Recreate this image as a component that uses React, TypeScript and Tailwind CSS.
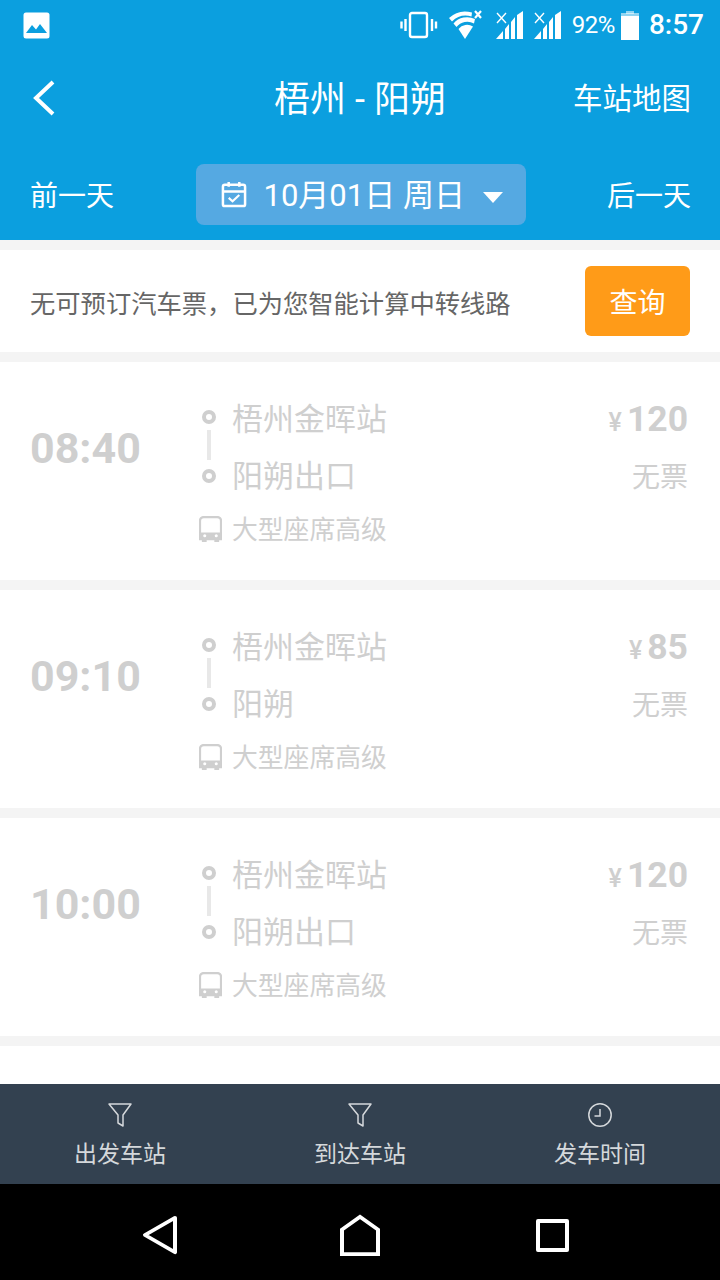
const cjk = "font-['Roboto','Noto_Sans_CJK_SC',sans-serif]";

function Wifi() {
  return (
    <svg width="34" height="30" viewBox="0 0 34 30" className="text-white">
      <path d="M0 8 A24 24 0 0 1 23 2.5 L22.5 6.5 A20 20 0 0 0 3 11.5 Z" fill="currentColor" />
      <path d="M4.5 13.5 A18 18 0 0 1 26 9 L25 13.5 A14 14 0 0 0 7.5 17 Z" fill="currentColor" />
      <path d="M9.5 19 A11 11 0 0 1 24 16.5 L16 29 Z" fill="currentColor" />
      <path d="M26 1 L32 8 M32 1 L26 8" stroke="currentColor" strokeWidth="2.2" />
    </svg>
  );
}

function Signal() {
  return (
    <svg width="28" height="30" viewBox="0 0 28 30" className="text-white">
      <path d="M0 29 L7 21 V29 Z M9 19 L13 14 V29 H9 Z M15 12 L19 7 V29 H15 Z M21 5 L27 1 V29 H21 Z" fill="currentColor" />
      <path d="M1 3 L10 13 M10 3 L1 13" stroke="currentColor" strokeWidth="1.4" />
    </svg>
  );
}

function StatusBar() {
  return (
    <div className="h-[50px] flex items-center justify-between pl-[23px] pr-[16px] text-white">
      <svg width="27" height="27" viewBox="0 0 27 27">
        <rect x="0.5" y="0.5" width="26" height="26" rx="2.5" fill="white" />
        <path d="M3 21 L9 13 L13 17.5 L17 12 L24 21 Z" fill="#0b9fdf" />
      </svg>
      <div className="flex items-center">
        <svg width="38" height="30" viewBox="0 0 38 30" className="mr-[11px]">
          <rect x="10" y="3" width="17" height="24" rx="2" fill="none" stroke="white" strokeWidth="2.4" />
          <path d="M5.5 9 V21 M1.5 11.5 V18.5 M32 9 V21 M36 11.5 V18.5" stroke="white" strokeWidth="2.4" />
        </svg>
        <Wifi />
        <div className="w-[13px]" />
        <Signal />
        <div className="w-[10px]" />
        <Signal />
        <span className={`${cjk} ml-[10px] text-[24px] leading-none tracking-[-0.5px]`}>92%</span>
        <svg width="20" height="30" viewBox="0 0 20 30" className="ml-[5px]">
          <rect x="6" y="1" width="8" height="3" fill="white" fillOpacity="0.55" />
          <rect x="1" y="3" width="18" height="6" fill="white" fillOpacity="0.55" />
          <rect x="1" y="6" width="18" height="24" fill="white" />
        </svg>
        <span className={`${cjk} ml-[9px] text-[28px] font-medium leading-none`}>8:57</span>
      </div>
    </div>
  );
}

function Header() {
  return (
    <div className="bg-[#0b9fdf] text-white">
      <StatusBar />
      <div className="relative h-[96px] flex items-center justify-between pl-[30px] pr-[29px]">
        <svg width="30" height="40" viewBox="0 0 30 40">
          <path d="M23 4 L6 20 L23 36" fill="none" stroke="white" strokeWidth="4" />
        </svg>
        <span className={`${cjk} absolute left-0 right-0 pt-[4px] text-center text-[36px] leading-none`}>梧州 - 阳朔</span>
        <span className={`${cjk} pt-[4px] text-[29.5px] leading-none`}>车站地图</span>
      </div>
      <div className="h-[94px] pt-[2px] flex items-center justify-between pl-[30px] pr-[29px]">
        <span className={`${cjk} pt-[5px] text-[28px] leading-none`}>前一天</span>
        <div className="w-[330px] h-[61px] bg-[#55a9e2] rounded-[8px] flex items-center pl-[25px]">
          <svg width="26" height="29" viewBox="0 0 27 30">
            <path d="M2 7 a2 2 0 0 1 2 -2 H23 a2 2 0 0 1 2 2 V25 a2 2 0 0 1 -2 2 H4 a2 2 0 0 1 -2 -2 Z M2 12 H25 M8 2 V7 M19 2 V7" fill="none" stroke="white" strokeWidth="2.6" />
            <path d="M8 18.5 L12 22 L19 15.5" fill="none" stroke="white" strokeWidth="2.2" />
          </svg>
          <span className={`${cjk} ml-[17px] pt-[3px] text-[31px] leading-none whitespace-pre`}>10月01日 周日</span>
          <div className="ml-[18px] mt-[7px] w-0 h-0 border-l-[10px] border-r-[10px] border-t-[11px] border-l-transparent border-r-transparent border-t-white" />
        </div>
        <span className={`${cjk} pt-[5px] text-[28px] leading-none`}>后一天</span>
      </div>
    </div>
  );
}

function Bus() {
  return (
    <svg width="23" height="27" viewBox="0 0 24 28" className="ml-[-1px]">
      <path d="M5 1 H19 A4 4 0 0 1 23 5 V24 H1 V5 A4 4 0 0 1 5 1 Z" fill="none" stroke="#cfcfcf" strokeWidth="2.4" />
      <path d="M1 17 H23 V24 H1 Z M3 24 H8 V27 H3 Z M16 24 H21 V27 H16 Z" fill="#cfcfcf" />
      <circle cx="6" cy="20.5" r="1.6" fill="white" />
      <circle cx="18" cy="20.5" r="1.6" fill="white" />
    </svg>
  );
}

function Ticket({ time, to, price }: { time: string; to: string; price: string }) {
  return (
    <div className="h-[218px] bg-white flex pl-[30px] pr-[32px] mb-[10px] text-[#cfcfcf]">
      <div className={`${cjk} w-[170px] pt-[65px] text-[43px] font-bold leading-none`}>{time}</div>
      <div className="flex-1 pt-[38px]">
        <div className="flex items-center h-[36px]">
          <div className="w-[14px] h-[14px] ml-[2px] mb-[2px] rounded-full border-[4px] border-[#cfcfcf]" />
          <span className={`${cjk} ml-[16px] pt-[2px] text-[31px] leading-none`}>梧州金晖站</span>
        </div>
        <div className="ml-[7px] mt-[-6px] w-[4px] h-[30px] bg-[#e8e8e8]" />
        <div className="flex items-center h-[36px] mt-[-2px]">
          <div className="w-[14px] h-[14px] ml-[2px] mb-[1px] rounded-full border-[4px] border-[#cfcfcf]" />
          <span className={`${cjk} ml-[16px] pt-[1px] text-[31px] leading-none`}>{to}</span>
        </div>
        <div className="flex items-center mt-[22px]">
          <Bus />
          <span className={`${cjk} ml-[10px] pt-[2px] text-[25.8px] leading-none`}>大型座席高级</span>
        </div>
      </div>
      <div className="pt-[40px] flex flex-col items-end">
        <div className="flex items-baseline h-[38px]">
          <span className={`${cjk} text-[25px] font-medium mr-[5px] leading-none`}>¥</span>
          <span className={`${cjk} text-[35.5px] font-bold leading-none`}>{price}</span>
        </div>
        <span className={`${cjk} mt-[24px] text-[28px] leading-none`}>无票</span>
      </div>
    </div>
  );
}

function Notice() {
  return (
    <div className="mt-[10px] mb-[10px] h-[102px] bg-white flex items-center justify-between pl-[30px] pr-[30px]">
      <span className={`${cjk} pt-[7px] text-[25.3px] leading-none text-[#666666]`}>无可预订汽车票，已为您智能计算中转线路</span>
      <button className={`${cjk} w-[105px] h-[70px] mb-[1px] pt-[6px] rounded-[6px] bg-[#ff9b18] text-white text-[28px] leading-none`}>查询</button>
    </div>
  );
}

function Funnel() {
  return (
    <svg width="26" height="26" viewBox="0 0 26 26">
      <path d="M2 2 H24 L16 13 V24 L11 21 V13 Z" fill="none" stroke="#d5d8db" strokeWidth="1.5" strokeLinejoin="round" />
    </svg>
  );
}

function Clock() {
  return (
    <svg width="26" height="26" viewBox="0 0 26 26">
      <circle cx="13" cy="13" r="11.2" fill="none" stroke="#d5d8db" strokeWidth="1.5" />
      <path d="M13 7 V14 H7.5" fill="none" stroke="#d5d8db" strokeWidth="1.5" />
    </svg>
  );
}

function Tab({ icon, label }: { icon: React.ReactNode; label: string }) {
  return (
    <div className="flex-1 flex flex-col items-center pt-[18px]">
      {icon}
      <span className={`${cjk} mt-[15px] text-[23px] leading-none text-[#d5d8db]`}>{label}</span>
    </div>
  );
}

export default function App() {
  return (
    <div className="w-[720px] h-[1280px] overflow-hidden flex flex-col bg-[#f4f4f4]">
      <Header />
      <div className="flex-1 overflow-hidden">
        <Notice />
        <Ticket time="08:40" to="阳朔出口" price="120" />
        <Ticket time="09:10" to="阳朔" price="85" />
        <Ticket time="10:00" to="阳朔出口" price="120" />
        <div className="h-[60px] bg-white" />
      </div>
      <div className="h-[100px] shrink-0 bg-[#334150] flex">
        <Tab icon={<Funnel />} label="出发车站" />
        <Tab icon={<Funnel />} label="到达车站" />
        <Tab icon={<Clock />} label="发车时间" />
      </div>
      <div className="h-[96px] shrink-0 bg-black flex items-center pt-[6px] pl-[140px]">
        <svg width="40" height="40" viewBox="0 0 40 44" preserveAspectRatio="none">
          <path d="M35 3 L5 22 L35 41 Z" fill="none" stroke="white" strokeWidth="4" strokeLinejoin="round" />
        </svg>
        <svg width="42" height="42" viewBox="0 0 42 46" className="ml-[159px]" preserveAspectRatio="none">
          <path d="M3 44 V17 L21 3 L39 17 V44 Z" fill="none" stroke="white" strokeWidth="4" />
        </svg>
        <div className="ml-[155px] w-[33px] h-[33px] border-[4px] border-white rounded-[2px]" />
      </div>
    </div>
  );
}
